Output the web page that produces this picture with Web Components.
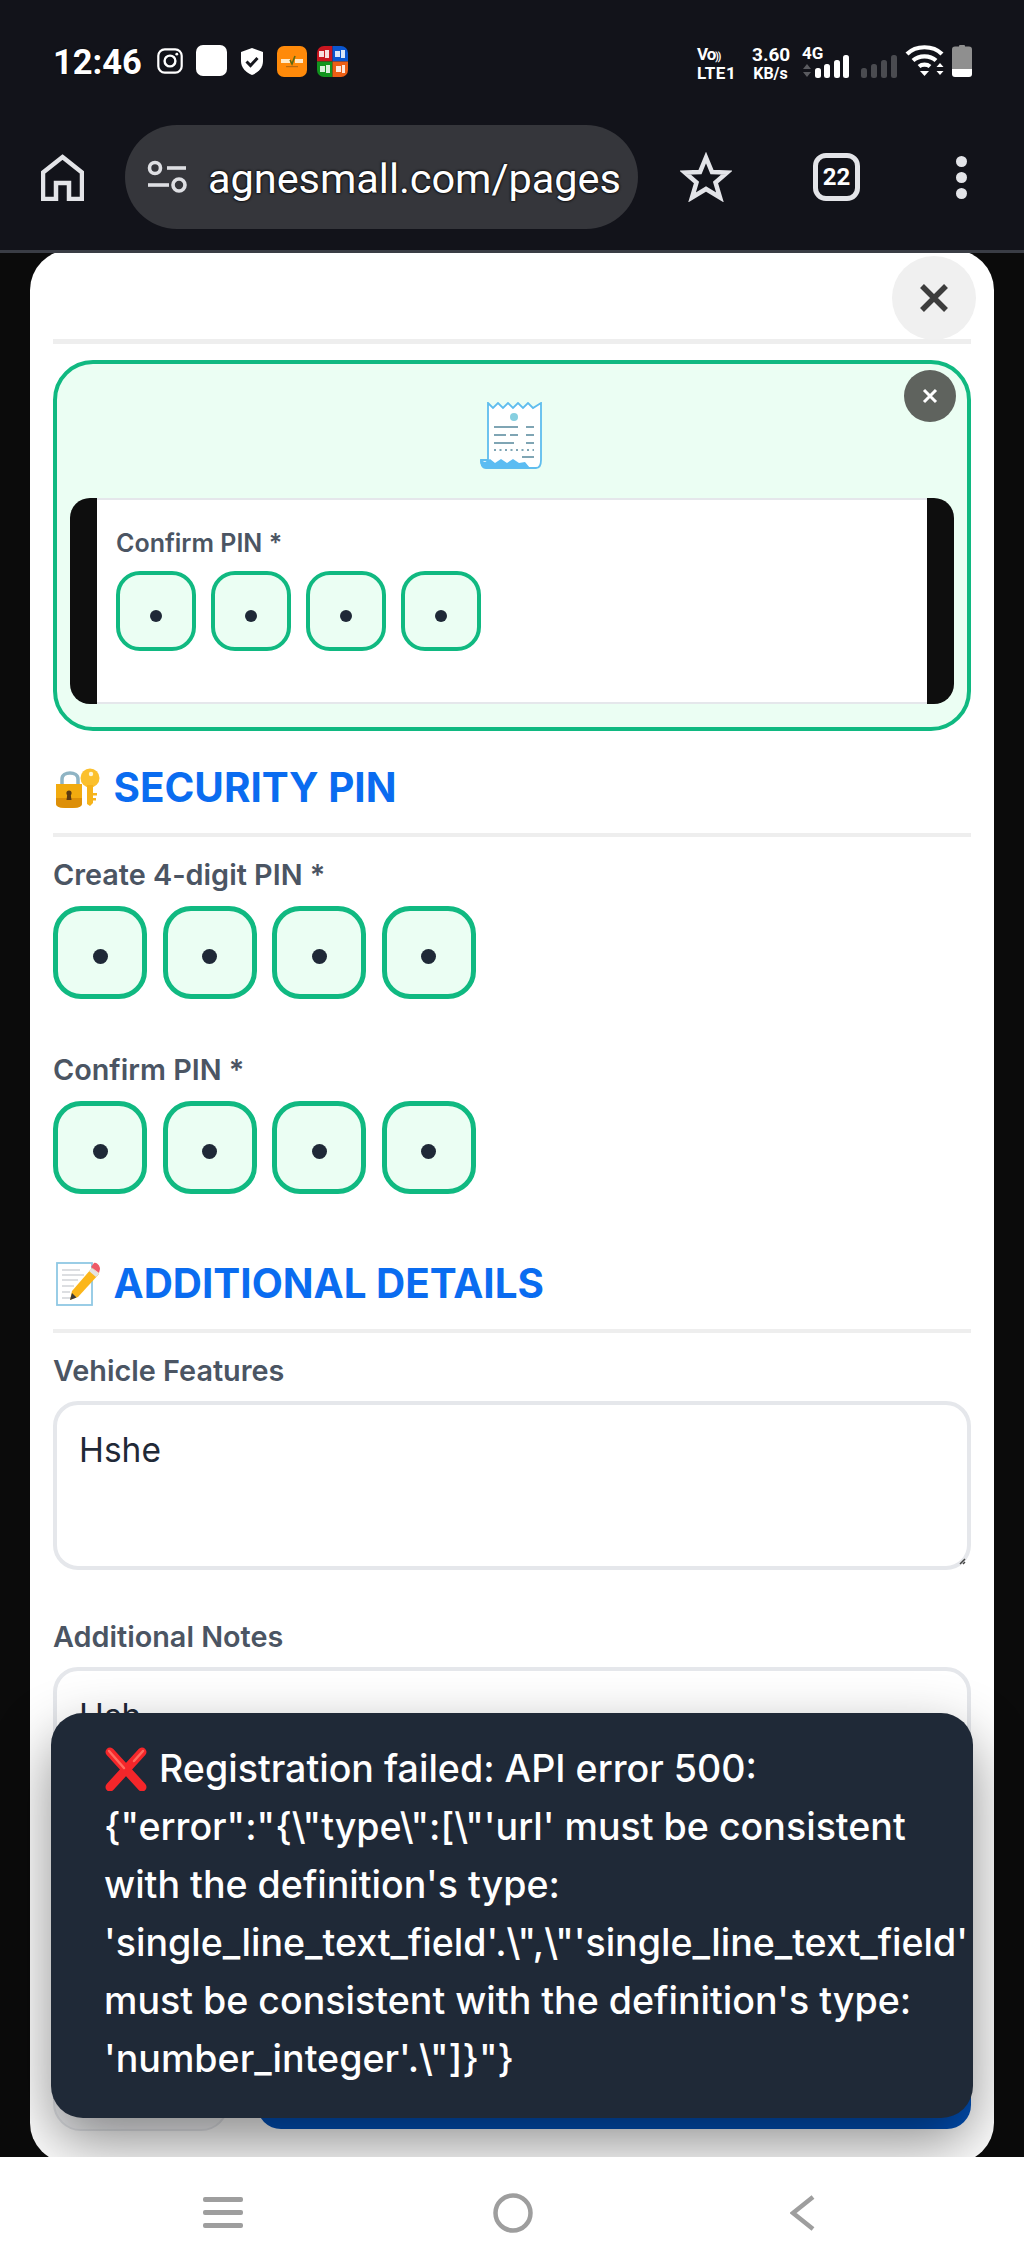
<!DOCTYPE html>
<html>
<head>
<meta charset="utf-8">
<title>Agnes Mall</title>
<style>
  html, body { margin: 0; padding: 0; background: #0b0b0b; }
  body { width: 1024px; height: 2268px; overflow: hidden; font-family: Inter, "Liberation Sans", sans-serif; }
</style>
</head>
<body>
<phone-shell>
  <status-bar slot="top"></status-bar>
  <browser-bar slot="top" url="agnesmall.com/pages" tabs="22"></browser-bar>

  <reg-modal>
    <scan-card>
      <pin-field label="Confirm PIN *" small></pin-field>
    </scan-card>

    <section-head kind="lock">SECURITY PIN</section-head>
    <pin-field label="Create 4-digit PIN *"></pin-field>
    <pin-field label="Confirm PIN *" spaced></pin-field>

    <section-head kind="memo" spaced>ADDITIONAL DETAILS</section-head>
    <text-field label="Vehicle Features">Hshe</text-field>
    <text-field label="Additional Notes" spaced>Hsh</text-field>

    <form-actions></form-actions>
  </reg-modal>

  <error-toast>Registration failed: API error 500: {"error":"{\"type\":[\"'url' must be consistent with the definition's type: 'single_line_text_field'.\",\"'single_line_text_field' must be consistent with the definition's type: 'number_integer'.\"]}"}</error-toast>

  <nav-bar slot="bottom"></nav-bar>
</phone-shell>

<script>
class PhoneShell extends HTMLElement {
    connectedCallback() {
        this.attachShadow({ mode: 'open' });
        this.shadowRoot.innerHTML = `
            <style>
                :host { display: flex; flex-direction: column; width: 1024px; height: 2268px; position: relative; background: #0b0b0b; }
                .top { background: #12131a; height: 250px; border-bottom: 3px solid #3a3d45; flex: none; position: relative; z-index: 2; }
                main { flex: 1; min-height: 0; overflow: hidden; padding: 0 30px; }
                .bottom { flex: none; position: relative; z-index: 2; }
            </style>
            <div class="top"><slot name="top"></slot></div>
            <main><slot></slot></main>
            <div class="bottom"><slot name="bottom"></slot></div>
        `;
    }
}

class StatusBar extends HTMLElement {
    connectedCallback() {
        this.attachShadow({ mode: 'open' });
        this.shadowRoot.innerHTML = `
            <style>
                :host { display: flex; justify-content: space-between; height: 125px; box-sizing: border-box; padding: 45px 52px 0 53px; color: #fff; font-family: Roboto, "Liberation Sans", sans-serif; }
                .left, .right { display: flex; align-items: flex-start; }
                .time { font-size: 34.500px; font-weight: 700; line-height: 34px; width: 87px; text-shadow: 0 0 2px #000; }
                svg { display: block; }
                .white { width: 31px; height: 31px; background: #fff; border-radius: 7px; margin-left: 13px; }
                .stack { font-weight: 700; font-size: 17px; line-height: 19px; text-align: center; }
                .stack div { height: 19px; }
                .net { width: 38px; font-size: 17px; text-align: left; }
                .speed { width: 37px; margin-left: 17px; font-size: 19px; }
                .speed .sub { font-size: 16px; }
                .g4 { margin-left: 13px; width: 48px; position: relative; }
            </style>
            <div class="left">
                <div class="time">12:46</div>
                <svg style="margin:3px 0 0 17px" width="26" height="26" viewBox="0 0 26 26" fill="none" stroke="#fff">
                    <rect x="1.3" y="1.3" width="23.4" height="23.4" rx="6.5" stroke-width="2.2"/>
                    <circle cx="13" cy="13" r="5.4" stroke-width="2.4"/>
                    <circle cx="19.8" cy="6.2" r="1.4" fill="#fff" stroke="none"/>
                </svg>
                <div class="white"></div>
                <svg style="margin:3px 0 0 14px" width="22" height="27" viewBox="0 0 22 27">
                    <path d="M11 0 L22 4 V13 C22 20 17 24.500 11 27 C5 24.500 0 20 0 13 V4 Z" fill="#fff"/>
                    <path d="M5.500 13.500 L9.500 17.500 L16.500 10" fill="none" stroke="#16171d" stroke-width="3"/>
                </svg>
                <svg style="margin:1px 0 0 14px" width="30" height="31" viewBox="0 0 30 31">
                    <rect width="30" height="31" rx="7" fill="#ff8a0a"/>
                    <rect x="4" y="13" width="9" height="4" fill="#ffe9c8"/>
                    <path d="M13 14 L15 18 L18 10" fill="none" stroke="#5b6a12" stroke-width="1.600"/>
                    <rect x="18" y="13" width="8" height="4" fill="#ffe9c8"/>
                    <rect x="9" y="20" width="12" height="1.200" fill="#b86a10"/>
                </svg>
                <svg style="margin:1px 0 0 10px" width="31" height="31" viewBox="0 0 31 31">
                    <defs><clipPath id="tile"><rect width="31" height="31" rx="7"/></clipPath></defs>
                    <g clip-path="url(#tile)">
                        <rect width="15.500" height="15.500" fill="#c9161f"/>
                        <rect x="15.500" width="15.500" height="15.500" fill="#0a56d0"/>
                        <rect y="15.500" width="15.500" height="15.500" fill="#12941f"/>
                        <rect x="15.500" y="15.500" width="15.500" height="15.500" fill="#ec5f14"/>
                        <g fill="#fff" opacity=".85">
                            <rect x="2" y="5" width="5" height="6"/><rect x="8" y="4" width="4" height="8"/>
                            <rect x="18" y="5" width="5" height="6"/><rect x="24" y="4" width="4" height="8"/>
                            <rect x="3" y="20" width="5" height="6"/><rect x="9" y="19" width="4" height="8"/>
                            <rect x="19" y="20" width="5" height="6"/><rect x="25" y="19" width="3" height="8"/>
                        </g>
                    </g>
                </svg>
            </div>
            <div class="right">
                <div class="stack net">
                    <div style="font-size:17px;letter-spacing:-1px">Vo<span style="font-size:10px">))</span></div>
                    <div class="sub" style="letter-spacing:.5px">LTE1</div>
                </div>
                <div class="stack speed">
                    <div>3.60</div>
                    <div class="sub">KB/s</div>
                </div>
                <div class="stack g4">
                    <div style="text-align:left;font-size:17px;line-height:16px;height:16px">4G</div>
                    <svg style="margin-top:-6px" width="48" height="24" viewBox="0 0 48 24">
                        <path d="M1 7 L5 2 L9 7 Z M1 10 L9 10 L5 15 Z" fill="#5a5b60" transform="translate(0 7)"/>
                        <rect x="13" y="13" width="6" height="10" rx="2.500" fill="#fff"/>
                        <rect x="22" y="9" width="6" height="14" rx="2.500" fill="#fff"/>
                        <rect x="32" y="5" width="6" height="18" rx="2.500" fill="#fff"/>
                        <rect x="41" y="0" width="6" height="23" rx="2.500" fill="#fff"/>
                    </svg>
                </div>
                <svg style="margin:10px 0 0 11px" width="36" height="24" viewBox="0 0 36 24" fill="#4a4b50">
                    <rect x="0" y="13" width="6" height="10" rx="2.500"/>
                    <rect x="10" y="9" width="6" height="14" rx="2.500"/>
                    <rect x="20" y="5" width="6" height="18" rx="2.500"/>
                    <rect x="30" y="0" width="6" height="23" rx="2.500"/>
                </svg>
                <svg style="margin-left:8px" width="40" height="33" viewBox="0 0 40 33" fill="none" stroke="#fff" stroke-width="4.200">
                    <path d="M2 9 C11 0 28 0 37 9"/>
                    <path d="M8 15.500 C14 10 25 10 31 15.500"/>
                    <path d="M14 21.500 C17 19 22 19 25 21.500"/>
                    <path d="M15 26 H24 L19.500 31 Z" fill="#fff" stroke="none"/>
                    <path d="M32.500 21 L36 17 L39.500 21 Z M32.500 25 H39.500 L36 29 Z" fill="#fff" stroke="none" transform="translate(-1 1)"/>
                </svg>
                <svg style="margin-left:7px" width="20" height="32" viewBox="0 0 20 32">
                    <rect x="7" width="6" height="3" rx="1" fill="#8f8f8f"/>
                    <path d="M3 1.500 H17 Q20 1.500 20 4.500 V24 H0 V4.500 Q0 1.500 3 1.500 Z" fill="#8f8f8f"/>
                    <path d="M0 24 H20 V29 Q20 32 17 32 H3 Q0 32 0 29 Z" fill="#fff"/>
                </svg>
            </div>
        `;
    }
}

class BrowserBar extends HTMLElement {
    connectedCallback() {
        const url = this.getAttribute('url');
        const tabs = this.getAttribute('tabs');
        this.attachShadow({ mode: 'open' });
        this.shadowRoot.innerHTML = `
            <style>
                :host { display: flex; align-items: center; height: 104px; padding-left: 41px; font-family: Roboto, "Liberation Sans", sans-serif; }
                svg { display: block; flex: none; }
                .pill { width: 513px; height: 104px; box-sizing: border-box; margin: 0 0 0 41px; background: #35363b; border-radius: 52px; display: flex; align-items: center; padding-left: 22px; color: #fff; font-size: 41.500px; flex: none; }
                .url { margin-left: 21px; white-space: nowrap; text-shadow: 0 0 3px #000, 0 0 2px #000; position: relative; top: 1px; letter-spacing: -.05px; }
                .tabs { width: 47px; height: 48px; box-sizing: border-box; margin-left: 81px; border: 5px solid #e3e4e8; border-radius: 13px; color: #fff; display: flex; align-items: center; justify-content: center; font-size: 24px; font-weight: 700; flex: none; }
                .dots { margin-left: 96px; display: flex; flex-direction: column; gap: 5px; }
                .dots i { display: block; width: 11px; height: 11px; border-radius: 50%; background: #e3e4e8; }
            </style>
            <svg width="43" height="47" viewBox="0 0 43 47" fill="none" stroke="#e3e4e8" stroke-width="4.500">
                <path d="M21.500 3 L41 18.500 V45 H28 V29 H15 V45 H2 V18.500 Z"/>
            </svg>
            <div class="pill">
                <svg width="40" height="34" viewBox="0 0 40 34" fill="none" stroke="#dedfe3" stroke-width="3.600">
                    <circle cx="8" cy="8" r="5.500"/>
                    <path d="M20 8 H39"/>
                    <path d="M1 25 H22"/>
                    <circle cx="32" cy="25" r="6"/>
                </svg>
                <span class="url">${url}</span>
            </div>
            <svg style="margin-left:42px" width="52" height="50" viewBox="0 0 52 50" fill="none" stroke="#e3e4e8" stroke-width="4.500">
                <path d="M26 5.500 L32 20 L47 20.500 L35.500 30.500 L40 45.500 L26 37 L12 45.500 L16.500 30.500 L5 20.500 L20 20 Z"/>
            </svg>
            <div class="tabs">${tabs}</div>
            <div class="dots"><i></i><i></i><i></i></div>
        `;
    }
}

class RegModal extends HTMLElement {
    connectedCallback() {
        this.attachShadow({ mode: 'open' });
        this.shadowRoot.innerHTML = `
            <style>
                :host { display: flex; flex-direction: column; box-sizing: border-box; height: 1913px; margin-top: -3px; padding: 89px 23px 32px; background: #fff; border-radius: 40px; position: relative; }
                .close { position: absolute; top: 6px; right: 18px; width: 84px; height: 84px; border-radius: 50%; background: #f0f0f0; display: flex; align-items: center; justify-content: center; }
                .rule { height: 5px; background: #eeeeee; margin-bottom: 16px; flex: none; }
            </style>
            <div class="close">
                <svg width="30" height="30" viewBox="0 0 30 30" stroke="#3d3d3d" stroke-width="5.500"><path d="M3 3 L27 27 M27 3 L3 27"/></svg>
            </div>
            <div class="rule"></div>
            <slot></slot>
        `;
    }
}

class ScanCard extends HTMLElement {
    connectedCallback() {
        this.attachShadow({ mode: 'open' });
        this.shadowRoot.innerHTML = `
            <style>
                :host { display: block; box-sizing: border-box; height: 371px; border: 4px solid #10b981; border-radius: 40px; background: #ebfef3; padding: 38px 13px 0; position: relative; flex: none; }
                .x { position: absolute; top: 6px; right: 11px; width: 52px; height: 52px; border-radius: 50%; background: #5f635e; display: flex; align-items: center; justify-content: center; }
                .icon { display: block; margin: 0 auto 29px; position: relative; left: -1px; }
                .panel { height: 206px; background: #0e0e0e; border-radius: 20px; overflow: hidden; }
                .paper { height: 206px; box-sizing: border-box; margin: 0 27px; background: #fff; padding: 26px 19px 0; border-top: 2px solid #e5e7eb; border-bottom: 2px solid #e5e7eb; }
            </style>
            <div class="x">
                <svg width="16" height="16" viewBox="0 0 16 16" stroke="#fff" stroke-width="3"><path d="M2 2 L14 14 M14 2 L2 14"/></svg>
            </div>
            <svg class="icon" width="63" height="67" viewBox="0 0 63 67">
                <path d="M8 1 L13 6 L18 1 L23 6 L28 1 L33 6 L38 1 L43 6 L48 1 L53 6 L61 1 V58 C61 63 60 66 56 66 H6 C2 66 1 62 1 58 H8 Z" fill="#fff" stroke="#5fbdee" stroke-width="1.800"/>
                <circle cx="34" cy="15" r="4" fill="#86cfe0"/>
                <g fill="#7fa5b4">
                    <rect x="14" y="24" width="24" height="2"/><rect x="46" y="24" width="8" height="2"/>
                    <rect x="14" y="32" width="12" height="2"/><rect x="30" y="32" width="8" height="2"/><rect x="46" y="32" width="8" height="2"/>
                    <rect x="14" y="40" width="20" height="2"/><rect x="46" y="40" width="8" height="2"/>
                    <rect x="42" y="54" width="12" height="2"/>
                </g>
                <path d="M14 48 H54" stroke="#7fa5b4" stroke-width="1.800" stroke-dasharray="2 3.500"/>
                <path d="M0 58 L5 60 L10 57 L15 61 L21 57 L27 61 L33 57 L39 61 L45 60 L50 66 H6 C2 66 0 62 0 58 Z" fill="#5bbcf2"/>
            </svg>
            <div class="panel"><div class="paper"><slot></slot></div></div>
        `;
    }
}

class SectionHead extends HTMLElement {
    connectedCallback() {
        const kind = this.getAttribute('kind');
        const icons = {
            lock: `<svg width="44" height="42" viewBox="0 0 44 42">
                <path d="M6 18 V12 C6 4 22 4 22 12 V18" fill="none" stroke="#8fb4c4" stroke-width="3.500"/>
                <path d="M0 17 H26 V36 C26 40 23 41 13 41 C3 41 0 40 0 36 Z" fill="#f2ab0f"/>
                <path d="M0 31 H26 V36 C26 40 23 41 13 41 C3 41 0 40 0 36 Z" fill="#dd8f08"/>
                <circle cx="13" cy="26" r="2.600" fill="#5b3b12"/><path d="M11.500 26 H14.500 L15.500 33 H10.500 Z" fill="#5b3b12"/>
                <circle cx="34" cy="11" r="9.500" fill="#fbc02d"/>
                <circle cx="35" cy="7" r="2.200" fill="#fff6d6"/>
                <path d="M31 18 H37 V36 L34 39 L31 37 Z" fill="#f6b31a"/>
                <path d="M37 26 H41 V28.500 H37 Z M37 31 H40 V33.500 H37 Z" fill="#f6b31a"/>
            </svg>`,
            memo: `<svg width="44" height="44" viewBox="0 0 44 44">
                <rect x="1" y="1" width="35" height="42" fill="#fff" stroke="#8fc8e4" stroke-width="1.800"/>
                <g stroke="#b9bec4" stroke-width="1.200">
                    <path d="M6 8 H24 M6 13 H28 M6 18 H22 M6 24 H18 M6 30 H14 M6 36 H16"/>
                </g>
                <path d="M36 6 L43 12 L22 35 L14 38 L16 29 Z" fill="#fbb61a"/>
                <path d="M36 6 L43 12 L40 15 L33 9 Z" fill="#e3e3e3"/>
                <path d="M38 1 C40 -.500 44 3 44 7 L43 11 L35 5 Z" fill="#ee5a66"/>
                <path d="M14 38 L16 31 L20.500 35.500 Z" fill="#3a3a3a"/>
            </svg>`
        };
        this.attachShadow({ mode: 'open' });
        this.shadowRoot.innerHTML = `
            <style>
                :host { display: block; flex: none; margin-top: ${this.hasAttribute('spaced') ? 63 : 30}px; }
                .row { display: flex; align-items: center; height: 54px; padding-left: 3px; gap: 13.500px; margin-bottom: 18px; }
                .t { font-size: 40.400px; font-weight: 700; color: #0a6cf0; line-height: 54px; white-space: nowrap; }
                .rule { height: 4px; background: #eeeeee; }
                svg { display: block; flex: none; }
            </style>
            <div class="row">${icons[kind]}<span class="t"><slot></slot></span></div>
            <div class="rule"></div>
        `;
    }
}

class PinField extends HTMLElement {
    connectedCallback() {
        const label = this.getAttribute('label');
        const small = this.hasAttribute('small');
        this.attachShadow({ mode: 'open' });
        this.shadowRoot.innerHTML = `
            <style>
                :host { display: block; flex: none; margin-top: ${this.hasAttribute('spaced') ? 54 : small ? 0 : 21}px; }
                label { display: block; font-size: ${small ? 25 : 28.800}px; font-weight: 600; color: #4b5563; line-height: 34px; margin-bottom: ${small ? 11 : 14}px; }
                .row { display: flex; gap: ${small ? 15 : 15.500}px; }
                .box { width: ${small ? 80 : 94}px; height: ${small ? 80 : 93}px; box-sizing: border-box; border: ${small ? 4.500 : 5}px solid #10b981; border-radius: ${small ? 24 : 28}px; background: #ebfef3; display: flex; align-items: center; justify-content: center; padding-top: ${small ? 10 : 8}px; }
                .box i { display: block; width: ${small ? 12 : 15}px; height: ${small ? 12 : 15}px; border-radius: 50%; background: #1f2937; }
            </style>
            <label>${label}</label>
            <div class="row">
                ${[0, 1, 2, 3].map(() => `<div class="box"><i></i></div>`).join('')}
            </div>
        `;
    }
}

class TextField extends HTMLElement {
    connectedCallback() {
        const label = this.getAttribute('label');
        const spaced = this.hasAttribute('spaced');
        this.attachShadow({ mode: 'open' });
        this.shadowRoot.innerHTML = `
            <style>
                :host { display: block; flex: none; margin-top: ${spaced ? 50 : 21}px; }
                label { display: block; font-size: 28.800px; font-weight: 600; color: #4b5563; line-height: 34px; margin-bottom: 13px; }
                .area { height: 169px; box-sizing: border-box; border: 4px solid #e5e7eb; border-radius: 25px; padding: 24px 22px; font-size: 33.500px; line-height: 42px; color: #1f2937; background: #fff; position: relative; }
                svg { position: absolute; right: 1px; bottom: 1px; }
            </style>
            <label>${label}</label>
            <div class="area"><slot></slot>
                <svg width="10" height="10" viewBox="0 0 10 10" stroke="#444" stroke-width="1.500"><path d="M9 4 L4 9 M9 7 L7 9"/></svg>
            </div>
        `;
    }
}

class FormActions extends HTMLElement {
    connectedCallback() {
        this.attachShadow({ mode: 'open' });
        this.shadowRoot.innerHTML = `
            <style>
                :host { display: flex; flex: none; margin-top: auto; height: 90px; gap: 28px; }
                .cancel { width: 176px; background: #f3f4f6; border: 2px solid #e5e7eb; border-radius: 28px; box-sizing: border-box; }
                .save { flex: 1; background: #0052bd; border-radius: 24px; margin-bottom: 2px; }
            </style>
            <div class="cancel"></div>
            <div class="save"></div>
        `;
    }
}

class ErrorToast extends HTMLElement {
    connectedCallback() {
        this.attachShadow({ mode: 'open' });
        this.shadowRoot.innerHTML = `
            <style>
                :host { display: block; position: absolute; z-index: 1; left: 51px; top: 1713px; width: 922px; height: 405px; box-sizing: border-box; padding: 27px 52px 0 53px; overflow: hidden; background: #1f2937; border-radius: 32px; color: #fff; font-size: 37.600px; font-weight: 500; line-height: 58px; box-shadow: 0 25px 60px rgba(0, 0, 0, .45); }
                svg { vertical-align: -9px; margin-right: 11px; }
            </style>
            <svg width="44" height="44" viewBox="0 0 44 44" fill="none" stroke-linecap="round">
                <path d="M6 5 L38 40 M38 5 L6 40" stroke="#f4262a" stroke-width="9"/>
                <path d="M5 4 L20 21 M39 4 L30 14" stroke="#ff6b60" stroke-width="2.500"/>
            </svg><slot></slot>
        `;
    }
}

class NavBar extends HTMLElement {
    connectedCallback() {
        this.attachShadow({ mode: 'open' });
        this.shadowRoot.innerHTML = `
            <style>
                :host { display: flex; align-items: center; height: 111px; padding: 0 0 0 203px; background: #fff; }
                svg { display: block; flex: none; }
            </style>
            <svg width="40" height="32" viewBox="0 0 40 32" fill="#9e9e9e">
                <rect y="0" width="40" height="5" rx="2"/><rect y="13" width="40" height="5" rx="2"/><rect y="26" width="40" height="5" rx="2"/>
            </svg>
            <svg style="margin-left:250px" width="40" height="40" viewBox="0 0 40 40" fill="none" stroke="#9e9e9e" stroke-width="4.500"><circle cx="20" cy="20" r="17.500"/></svg>
            <svg style="margin-left:257px" width="25" height="36" viewBox="0 0 25 36" fill="none" stroke="#9e9e9e" stroke-width="4.500"><path d="M23 2 L3 18 L23 34"/></svg>
        `;
    }
}

customElements.define('phone-shell', PhoneShell);
customElements.define('status-bar', StatusBar);
customElements.define('browser-bar', BrowserBar);
customElements.define('reg-modal', RegModal);
customElements.define('scan-card', ScanCard);
customElements.define('section-head', SectionHead);
customElements.define('pin-field', PinField);
customElements.define('text-field', TextField);
customElements.define('form-actions', FormActions);
customElements.define('error-toast', ErrorToast);
customElements.define('nav-bar', NavBar);
</script>
</body>
</html>
